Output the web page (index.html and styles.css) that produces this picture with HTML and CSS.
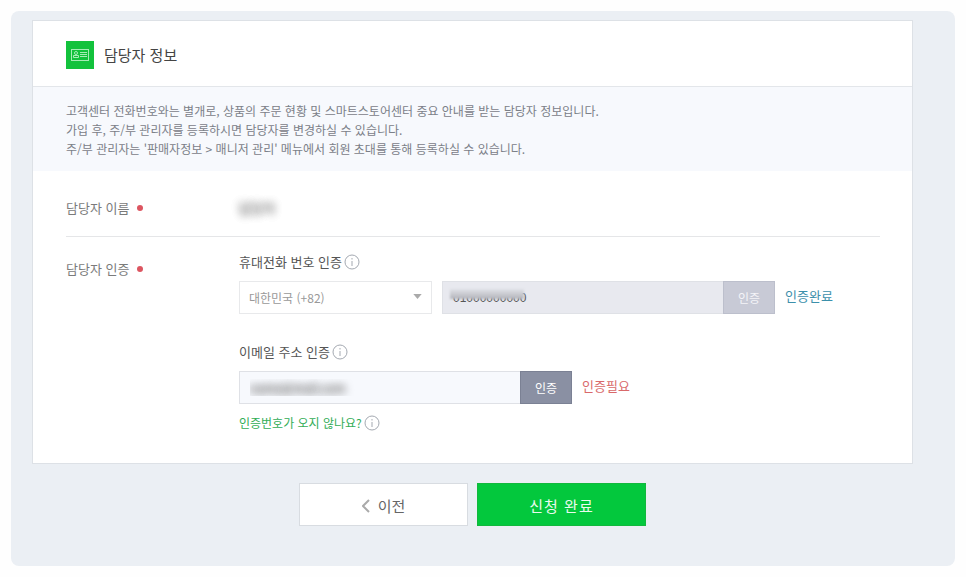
FILE: index.html
```html
<!DOCTYPE html>
<html lang="ko">
<head>
<meta charset="utf-8">
<title>담당자 정보</title>
<link rel="stylesheet" href="styles.css">
</head>
<body>
<main class="shell">
  <form>
    <section class="card">
      <header class="card-header">
        <svg class="badge" viewBox="0 0 29 29" aria-hidden="true">
          <rect x="1" y="1" width="28" height="28" fill="#12c23c"/>
          <g fill="none" stroke="#a5ecb5">
            <rect x="6.500" y="9.500" width="17" height="11"/>
            <path d="M15 12.500h7M15 14.500h7M15 16.500h7"/>
            <circle cx="11" cy="13" r="1.500"/>
            <path d="M8.500 17.500v-2h5v2z"/>
          </g>
        </svg>
        <h1>담당자 정보</h1>
      </header>
      <div class="notice">
        <p>고객센터 전화번호와는 별개로, 상품의 주문 현황 및 스마트스토어센터 중요 안내를 받는 담당자 정보입니다.</p>
        <p>가입 후, 주/부 관리자를 등록하시면 담당자를 변경하실 수 있습니다.</p>
        <p>주/부 관리자는 '판매자정보 &gt; 매니저 관리' 메뉴에서 회원 초대를 통해 등록하실 수 있습니다.</p>
      </div>
      <div class="rows">
        <div class="row name-row">
          <div class="row-label">담당자 이름<i class="dot"></i></div>
          <div class="name-value"><span class="blurred">담당자</span></div>
        </div>
        <div class="row auth-row">
          <div class="row-label auth-label">담당자 인증<i class="dot"></i></div>
          <div class="fields">
            <div class="field">
              <div class="field-title"><label for="phone">휴대전화 번호 인증</label><svg class="info" viewBox="0 0 16 16" aria-hidden="true"><circle cx="8" cy="8" r="7"/><path d="M8 7v5M8 4v1.500"/></svg></div>
              <div class="controls">
                <div class="select-box">
                  <select aria-label="국가" disabled><option>대한민국 (+82)</option></select>
                  <svg class="caret" viewBox="0 0 10 6" aria-hidden="true"><path d="M0 0h10L5 6z"/></svg>
                </div>
                <div class="joined phone-box">
                  <input class="phone" id="phone" type="tel" value="01000000000" disabled>
                  <span class="smudge"></span>
                  <button class="verify" type="button" disabled>인증</button>
                </div>
                <span class="status done">인증완료</span>
              </div>
            </div>
            <div class="field">
              <div class="field-title"><label for="email">이메일 주소 인증</label><svg class="info" viewBox="0 0 16 16" aria-hidden="true"><circle cx="8" cy="8" r="7"/><path d="M8 7v5M8 4v1.500"/></svg></div>
              <div class="controls">
                <div class="joined">
                  <input class="email" id="email" type="text" value="name@mail.com">
                  <button class="verify" type="button">인증</button>
                </div>
                <span class="status needed">인증필요</span>
              </div>
              <div class="help"><a href="#help">인증번호가 오지 않나요?</a><svg class="info" viewBox="0 0 16 16" aria-hidden="true"><circle cx="8" cy="8" r="7"/><path d="M8 7v5M8 4v1.500"/></svg></div>
            </div>
          </div>
        </div>
      </div>
    </section>
    <div class="actions">
      <button class="action back" type="button"><svg class="chevron" viewBox="0 0 8 14" aria-hidden="true"><path d="M7 1L1 7l6 6"/></svg>이전</button>
      <button class="action submit" type="submit">신청 완료</button>
    </div>
  </form>
</main>
</body>
</html>
```
FILE: styles.css
```css
* { box-sizing: border-box; }

body {
  margin: 0;
  padding: 11px;
  background: #fefefe;
  color: #555;
  font: 13px/19px "Noto Sans CJK KR", sans-serif;
}

h1, p { margin: 0; }
svg { display: block; flex: none; }
button, input, select { font: inherit; margin: 0; border-radius: 0; }

.shell {
  padding: 9px 42px 40px 21px;
  border-radius: 8px;
  background: #ebeff4;
}

.card {
  background: #fff;
  border: 1px solid #dde1e6;
}

.card-header {
  display: flex;
  align-items: center;
  gap: 10px;
  height: 66px;
  padding: 2px 32px 0;
  border-bottom: 1px solid #e3e6ea;
}
.badge { width: 29px; height: 29px; }
h1 { font-size: 15px; font-weight: 400; line-height: 24px; color: #444; }

.notice {
  padding: 14px 33px 13px;
  background: #f7f9fd;
  color: #7b8088;
  font-size: 12px;
}

.rows { padding: 0 32px 31px 33px; }
.row { display: flex; }
.row-label { display: flex; align-items: center; gap: 8px; flex: none; width: 173px; height: 19px; color: #7b7b7b; }
.dot { width: 6px; height: 6px; border-radius: 50%; background: #dc5560; }
.name-row { padding: 27px 0 19px; border-bottom: 1px solid #e5e6e8; }
.blurred { color: transparent; text-shadow: 0 0 8px #888, 0 0 8px #999; }
.auth-row { padding-top: 15px; }
.auth-label { margin-top: 7px; }

.field + .field { margin-top: 28px; }
.field-title, .help { display: flex; align-items: center; gap: 2px; height: 19px; }
.info { width: 16px; height: 16px; fill: none; stroke: #a4a9b1; stroke-width: 1; }

.controls { display: flex; margin-top: 10px; height: 33px; }
.select-box { position: relative; width: 193px; margin-right: 10px; }
select {
  width: 100%;
  height: 33px;
  padding: 0 9px;
  border: 1px solid #e8e9eb;
  background: #fff;
  color: #999;
  font-size: 12px;
  opacity: 1;
  appearance: none;
}
.caret { position: absolute; right: 10px; top: 13px; width: 9px; height: 5px; fill: #aaa; }

.joined { position: relative; display: flex; }
input {
  width: 281px;
  height: 33px;
  padding: 0 10px;
  border: 1px solid #dfe1e6;
  border-right: 0;
}
.phone { background: #e8e9ef; color: #555; font: 12px "Liberation Sans", sans-serif; }
.smudge {
  position: absolute;
  left: 8px;
  top: 8px;
  width: 74px;
  height: 10px;
  background: linear-gradient(#e0e1e7, #b3b4bb);
  filter: blur(1px);
}
.email { background: #f7f9fd; color: transparent; font-size: 12px; text-shadow: 0 0 8px #777, 0 0 9px #888; }
.verify {
  width: 52px;
  height: 33px;
  padding: 0;
  border: 1px solid #7b8194;
  background: #8a90a3;
  color: #fff;
  font-size: 12px;
}
.verify:disabled { border-color: #bcbfcc; background: #c8cad6; color: #f4f4f8; }
.status { margin: 5px 0 0 10px; }
.done { color: #3c90ab; }
.needed { color: #d9696a; }
.help { margin-top: 9px; }
.help a { color: #33ad57; text-decoration: none; font-size: 12px; }

.actions { display: flex; justify-content: center; gap: 9px; margin-top: 19px; }
.action {
  display: flex;
  align-items: center;
  justify-content: center;
  gap: 8px;
  width: 169px;
  height: 43px;
  padding: 2px 0 0;
  border: 1px solid #d8dce1;
  background: #fff;
  color: #666;
  font-size: 15px;
}
.submit { border-color: #12b83d; background: #03c83d; color: #e9fbee; letter-spacing: 1px; }
.chevron { width: 8px; height: 14px; fill: none; stroke: #aaa; stroke-width: 2; }
```
